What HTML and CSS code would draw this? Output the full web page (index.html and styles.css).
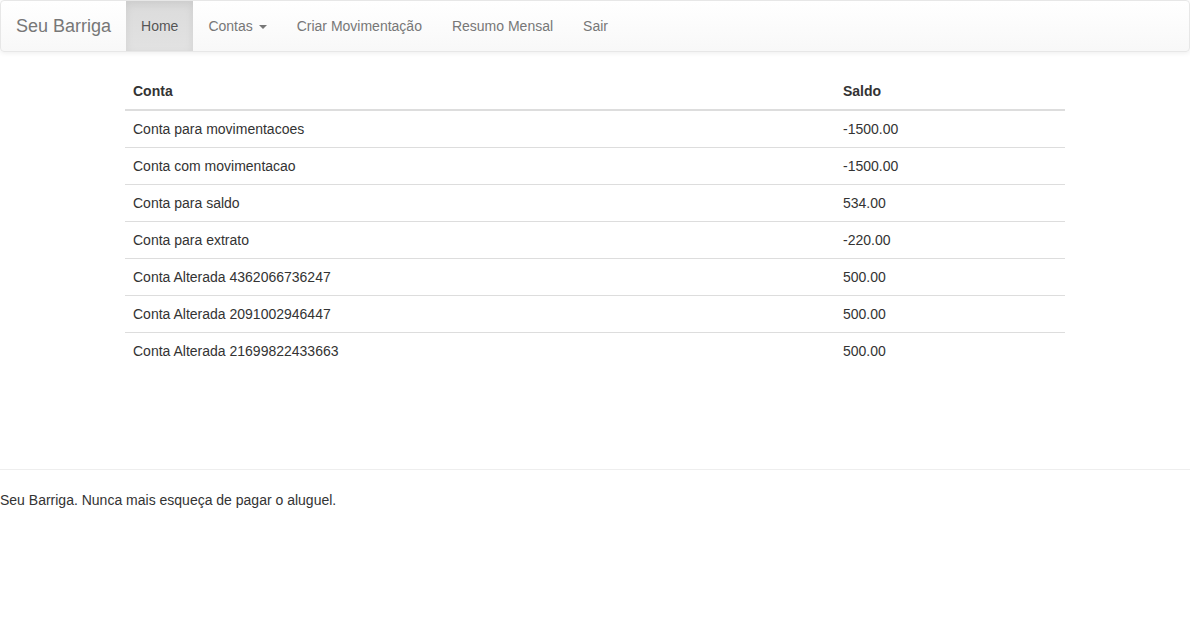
FILE: index.html
```html
<!DOCTYPE html>
<html lang="pt">
<head>
<meta charset="utf-8">
<title>Seu Barriga</title>
<link rel="stylesheet" href="styles.css">
</head>
<body>
<nav class="navbar">
  <a class="brand" href="#">Seu Barriga</a>
  <ul class="nav">
    <li class="active"><a href="#">Home</a></li>
    <li><a href="#">Contas <span class="caret"></span></a></li>
    <li><a href="#">Criar Movimentação</a></li>
    <li><a href="#">Resumo Mensal</a></li>
    <li><a href="#">Sair</a></li>
  </ul>
</nav>
<div class="container">
  <table class="table">
    <thead>
      <tr><th class="col-conta">Conta</th><th>Saldo</th></tr>
    </thead>
    <tbody>
      <tr><td>Conta para movimentacoes</td><td>-1500.00</td></tr>
      <tr><td>Conta com movimentacao</td><td>-1500.00</td></tr>
      <tr><td>Conta para saldo</td><td>534.00</td></tr>
      <tr><td>Conta para extrato</td><td>-220.00</td></tr>
      <tr><td>Conta Alterada 4362066736247</td><td>500.00</td></tr>
      <tr><td>Conta Alterada 2091002946447</td><td>500.00</td></tr>
      <tr><td>Conta Alterada 21699822433663</td><td>500.00</td></tr>
    </tbody>
  </table>
</div>
<div class="footer">
  <hr class="rule">
  <p class="footer-text">Seu Barriga. Nunca mais esqueça de pagar o aluguel.</p>
</div>
</body>
</html>
```

FILE: styles.css
```css
* { box-sizing: border-box; }
html, body { margin: 0; padding: 0; }
body {
  font-family: "Liberation Sans", Arial, Helvetica, sans-serif;
  font-size: 14px;
  line-height: 20px;
  color: #333;
  background: #fff;
}
a { text-decoration: none; }

.navbar {
  display: flex;
  align-items: stretch;
  height: 52px;
  border: 1px solid #e7e7e7;
  border-radius: 4px;
  background-image: linear-gradient(to bottom, #fff 0%, #f8f8f8 100%);
  box-shadow: inset 0 1px 0 rgba(255,255,255,.15), 0 1px 5px rgba(0,0,0,.075);
  margin-bottom: 21px;
}
.brand {
  display: block;
  padding: 15px;
  font-size: 18px;
  line-height: 20px;
  color: #777;
  height: 50px;
  text-shadow: 0 1px 0 rgba(255,255,255,.25);
}
.nav {
  display: flex;
  list-style: none;
  margin: 0;
  padding: 0;
}
.nav li a {
  display: block;
  padding: 15px;
  line-height: 20px;
  height: 50px;
  color: #777;
  text-shadow: 0 1px 0 rgba(255,255,255,.25);
}
.nav li.active a {
  color: #555;
  background-image: linear-gradient(to bottom, #dbdbdb 0%, #e2e2e2 100%);
  box-shadow: inset 0 3px 9px rgba(0,0,0,.075);
}
.caret {
  display: inline-block;
  width: 0;
  height: 0;
  margin-left: 2px;
  vertical-align: middle;
  border-top: 4px solid;
  border-right: 4px solid transparent;
  border-left: 4px solid transparent;
}

.container {
  width: 970px;
  margin: 0 auto;
  padding: 0 15px;
}
.table {
  width: 100%;
  border-collapse: collapse;
  border-spacing: 0;
  margin-bottom: 100px;
}
.table th, .table td {
  padding: 8px;
  line-height: 20px;
  text-align: left;
  vertical-align: top;
}
.table th {
  font-weight: bold;
  border-bottom: 2px solid #ddd;
}
.table td { border-top: 1px solid #ddd; }
.table tbody tr:first-child td { border-top: 0; }
.col-conta { width: 710px; }

.rule {
  margin: 0 0 20px;
  border: 0;
  border-top: 1px solid #eee;
}
.footer-text { margin: 0 0 10px; }
```
